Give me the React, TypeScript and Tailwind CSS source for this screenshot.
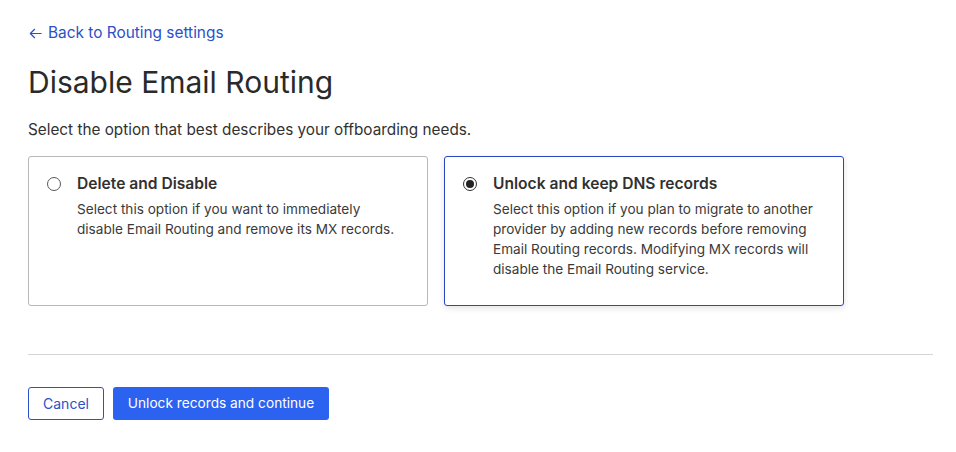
import React from "react";

export default function App() {
  return (
    <div className="min-h-[452px] w-[956px] bg-white text-[#313131]" style={{ fontFamily: "Inter, 'Noto Sans', sans-serif" }}>
      <div className="pl-[28px] pr-[23px] pt-[23px]">
        <a className="flex items-center gap-[5px] text-[15.4px] leading-[20px] text-[#2c50c8]">
          <svg width="15" height="15" viewBox="0 0 16 16" fill="none" stroke="currentColor" strokeWidth="1.3" strokeLinecap="round" strokeLinejoin="round">
            <path d="M14 8H2.5M7 3.5L2.5 8L7 12.5" />
          </svg>
          <span>Back to Routing settings</span>
        </a>
        <h1 className="mt-[21px] text-[30px] leading-[36px] font-normal text-[#2a2a2a]">Disable Email Routing</h1>
        <p className="mt-[20px] text-[15.3px] leading-[20px] text-[#313131]">Select the option that best describes your offboarding needs.</p>
        <div className="mt-[16px] flex gap-[16px]">
          <div className="h-[150px] w-[400px] rounded-[3px] border border-[#b8b8b8] pl-[18px] pr-[10px] pt-[17px]">
            <div className="flex items-start gap-[16px]">
              <div className="mt-[3px] h-[14px] w-[14px] shrink-0 rounded-full border border-[#595959]" />
              <div>
                <div className="text-[15.6px] leading-[20px] font-semibold text-[#313131]">Delete and Disable</div>
                <div className="mt-[5px] text-[13.6px] leading-[20px] text-[#3a3a3a]">
                  Select this option if you want to immediately<br />disable Email Routing and remove its MX records.
                </div>
              </div>
            </div>
          </div>
          <div className="h-[150px] w-[400px] rounded-[3px] border border-[#2a46c4] pl-[18px] pr-[10px] pt-[17px] shadow-[0_2px_6px_rgba(0,0,0,0.12)]">
            <div className="flex items-start gap-[16px]">
              <div className="mt-[3px] flex h-[14px] w-[14px] shrink-0 items-center justify-center rounded-full border border-[#313131]">
                <div className="h-[8px] w-[8px] rounded-full bg-[#222]" />
              </div>
              <div>
                <div className="text-[15.6px] leading-[20px] font-semibold text-[#313131]">Unlock and keep DNS records</div>
                <div className="mt-[5px] text-[13.6px] leading-[20px] text-[#3a3a3a]">
                  Select this option if you plan to migrate to another<br />provider by adding new records before removing<br />Email Routing records. Modifying MX records will<br />disable the Email Routing service.
                </div>
              </div>
            </div>
          </div>
        </div>
        <div className="mt-[48px] h-px w-[905px] bg-[#d4d4d4]" />
        <div className="mt-[32px] flex gap-[9px]">
          <button className="h-[33px] w-[76px] rounded-[3px] border border-[#2c50c8] bg-white text-[14px] text-[#2c50c8]">Cancel</button>
          <button className="h-[33px] w-[216px] rounded-[3px] bg-[#2b62f0] text-[13.7px] text-white">Unlock records and continue</button>
        </div>
      </div>
    </div>
  );
}
